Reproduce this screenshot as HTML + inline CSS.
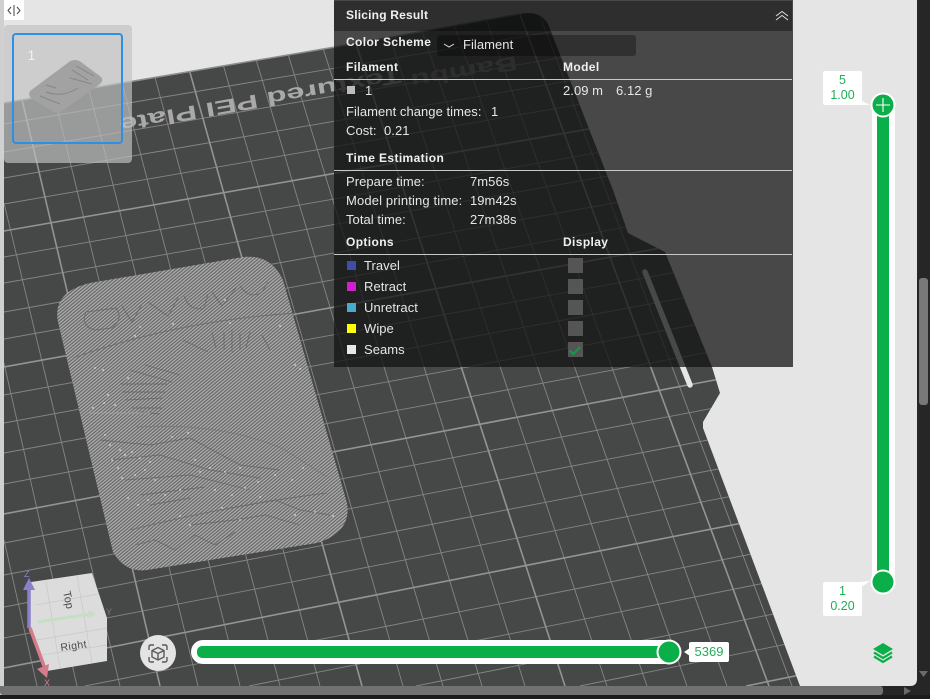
<!DOCTYPE html>
<html lang="en">
<head>
<meta charset="utf-8">
<title>Slicing Result</title>
<style>
html,body{margin:0;padding:0;width:930px;height:699px;overflow:hidden;background:#e5e5e5;font-family:"Liberation Sans",sans-serif}
#stage{position:relative;width:930px;height:699px;overflow:hidden}
svg.full{position:absolute;left:0;top:0;display:block}
.abs{position:absolute}
#panel{position:absolute;left:334px;top:0;width:459px;height:367px;background:rgba(19,19,19,.75)}
#title{position:absolute;left:334px;top:1px;width:458px;height:30px;background:rgba(0,0,0,.36)}
.t{position:absolute;height:16px;line-height:16px;font-size:13px;letter-spacing:.05px;color:#e6e6e6;white-space:pre}
.b{font-weight:bold;font-size:12px;letter-spacing:.38px;color:#f0f0f0}
.hr{position:absolute;left:334px;width:458px;height:1px;background:#c9c9c9}
.sw{position:absolute;left:347px;width:9px;height:9px}
.cb{position:absolute;left:568px;width:15px;height:15px;background:#555}
.lab{position:absolute;background:#fff;color:#1fae57;font-size:12.5px;line-height:14.500px;text-align:center;border-radius:2px}
</style>
</head>
<body>
<div id="stage">
<svg class="full" width="930" height="699" viewBox="0 0 930 699">
<defs>
<clipPath id="plate"><path d="M4 103L335 47L520 14Q540 10 548 24L613 190L628 233L665 252L712 367L720 393L703 422L703 428L800 686L4 686Z"/></clipPath>
<pattern id="hatch" patternUnits="userSpaceOnUse" width="2.5" height="2.5" patternTransform="rotate(-40)">
<rect width="2.5" height="2.5" fill="#666"/>
<rect width="2.5" height="1.25" fill="#b0b0b0"/>
</pattern>
<clipPath id="modelclip"><path d="M90 283L243 257Q271 254 283 280L347 503Q352 532 317 543L147 570Q125 573 113 552L58 322Q52 292 90 283Z"/></clipPath>
</defs>
<rect width="930" height="699" fill="#e5e5e5"/>
<rect x="0" y="0" width="4" height="699" fill="#cfd0cf"/>
<path d="M4 103L335 47L520 14Q540 10 548 24L613 190L628 233L665 252L712 367L720 393L703 422L703 428L800 686L4 686Z" fill="#464847"/>
<path d="M4 103L335 47L520 14" fill="none" stroke="#8e8e8e" stroke-width="1.5"/>
<g clip-path="url(#plate)">
<path fill="none" stroke="#858585" stroke-width=".9" d="M4 124L644 16M4 152L800 17M4 178L900 24M4 204L900 48.9M4 257L900 99.5M4 283L900 124.3M4 312L900 152M4 339L900 177.8M4 395L900 231.3M4 423L900 258M4 453L900 286.7M4 484L900 316.3M4 543L900 372.7M4 575L900 403.2M4 607L900 433.8M4 638L900 463.4M85 686L900 524.6M249 686L900 556M416 686L900 588.5M580 686L900 621"/>
<path fill="none" stroke="#858585" stroke-width=".9" d="M4 203L120 686M4 363L77 686M4 540L37 686M30.6 0L198 686M66.2 0L240 686M100.2 0L280 686M134 0L320 686M204.4 0L403 686M238.3 0L443 686M271.4 0L482 686M307.8 0L525 686M377.4 0L607 686M411.3 0L647 686M445.2 0L687 686M479.1 0L727 686M534.2 0L792 686"/>
<path fill="none" stroke="#939393" stroke-width="1.6" d="M4 231L900 74.7M4 367L900 204.6M4 514L900 345M4 668L900 492M746 686L900 654.5M4 23L160 686M169.7 0L362 686M341.8 0L565 686M514.7 0L769 686"/>
<g font-family="Liberation Sans, sans-serif" font-weight="bold" fill="#a9a9a9">
<text transform="translate(400 69) rotate(170)" font-size="20" textLength="286" lengthAdjust="spacingAndGlyphs">Textured PEI Plate</text>
<text transform="translate(516 56) rotate(170)" font-size="20" fill="#7d7d7d" textLength="108" lengthAdjust="spacingAndGlyphs">Bambu</text>
</g>
<path d="M645 272L690 385" stroke="#e5e5e5" stroke-width="5.500" stroke-linecap="round"/>
</g>
<!-- printed model -->
<path d="M90 283L243 257Q271 254 283 280L347 503Q352 532 317 543L147 570Q125 573 113 552L58 322Q52 292 90 283Z" fill="url(#hatch)"/>
<g clip-path="url(#modelclip)" fill="none" stroke="#5f5f5f" stroke-width=".9" opacity=".7">
<path d="M73 358Q180 320 297 313"/>
<path d="M86 312Q80 326 95 330L112 328Q124 318 116 308ZM122 306L132 322L142 304M148 302L168 316L178 298M184 296Q190 312 204 308L208 294M212 292L222 306L236 288M240 286Q250 300 262 292L268 282"/>
<path d="M183 340L208 352M212 332L216 348M224 332V350M232 330V352M240 333V350M250 332L246 348M262 335L270 350"/>
<path stroke="#747474" d="M137 427Q223 422 285 450L327 477"/>
<path d="M145 365L180 375M130 370L172 382M120 384L167 384M122 392L165 392M125 400L162 398M132 408L162 408M140 412L160 414"/>
<path d="M130 530Q230 505 327 493"/>
<path d="M100 440L150 445L190 438L240 465L280 470M110 460L160 455L210 470L260 478M125 480L190 475L250 490M140 495L205 487M150 505L190 498M220 510L275 500L300 510L330 515M190 525L235 520L265 515L300 525"/>
<path d="M135 545L155 540L175 550L195 535L215 545L235 532"/>
<path stroke="#a5a5a5" d="M87 413L150 413"/>
</g>
<path clip-path="url(#modelclip)" fill="none" stroke="#f3f3f3" stroke-width="1.400" stroke-linecap="round" d="M105 435h.1M110 445h.1M112 460h.1M120 450h.1M118 468h.1M125 455h.1M132 452h.1M140 458h.1M122 478h.1M135 475h.1M145 470h.1M150 462h.1M155 480h.1M172 437h.1M188 433h.1M195 460h.1M200 472h.1M210 468h.1M225 472h.1M240 468h.1M245 488h.1M258 482h.1M275 475h.1M303 468h.1M292 480h.1M148 500h.1M128 498h.1M138 505h.1M165 495h.1M180 490h.1M215 490h.1M232 495h.1M260 497h.1M295 515h.1M315 512h.1M333 516h.1M240 520h.1M222 508h.1M180 516h.1M190 525h.1M135 336h.1M103 370h.1M95 368h.1M128 378h.1M108 395h.1M104 403h.1M93 408h.1M115 405h.1M173 324h.1M140 327h.1M225 300h.1M230 323h.1M280 326h.1M295 365h.1M300 369h.1"/>
<!-- thumbnail panel -->
<rect x="4" y="25" width="128" height="138" rx="4" fill="#c1c1c1" fill-opacity=".68"/>
<path d="M30 91L69 62Q75 58 81 62L101 77Q104 80 100 84L62 111Q57 114 52 111L31 98Q28 95 30 91Z" fill="#a2a2a2"/>
<path d="M46 85L56 88M46 92Q62 98 78 88M72 70L88 80M76 66L94 76M70 78L92 84M40 96L60 104" stroke="#868686" stroke-width="1" fill="none"/>
<rect x="13" y="34" width="109" height="109" rx="3" fill="none" stroke="#2e8fe6" stroke-width="2"/>
<text x="27.5" y="60" font-family="Liberation Sans, sans-serif" font-size="14" fill="#f2f2f2">1</text>
<!-- top-left button -->
<rect x="4" y="0" width="20" height="20" fill="#fff"/>
<path d="M11 7L8 10.500L11 14M17 7L20 10.500L17 14" fill="none" stroke="#444" stroke-width="1"/>
<path d="M14 5V16" stroke="#444" stroke-width="1"/>
<!-- navigation cube -->
<path d="M31 582L92 573L107 618V661L47 671L29 625Z" fill="#dcdcdc"/>
<path d="M46 581L60 668M77 575L92 663M36 605L98 594M37 640L107 628M42 655L107 645" stroke="#c8c8c8" stroke-width=".7" fill="none"/>
<path d="M37 622L90 614" stroke="#c6dfc4" stroke-width="3"/>
<path d="M88 610L96 614L89 618Z" fill="#c6dfc4"/>
<text transform="translate(63 592) rotate(78)" font-family="Liberation Sans, sans-serif" font-size="11" fill="#4a4a4a">Top</text>
<text transform="translate(61 651) rotate(-8)" font-family="Liberation Sans, sans-serif" font-size="10.500" fill="#4a4a4a" letter-spacing=".4">Right</text>
<path d="M29 590V628" stroke="#8c80c9" stroke-width="3.500"/>
<path d="M29 578L35 590H23Z" fill="#8c80c9"/>
<text x="24" y="577" font-family="Liberation Sans, sans-serif" font-size="9" fill="#8c80c9">Z</text>
<path d="M30 628L44 666" stroke="#d67b8b" stroke-width="3.500"/>
<path d="M37 669L49 664L47 678Z" fill="#d67b8b"/>
<text x="44" y="686" font-family="Liberation Sans, sans-serif" font-size="9" fill="#d67b8b">X</text>
<text x="106" y="615" font-family="Liberation Sans, sans-serif" font-size="9" fill="#7c7c7c">Y</text>
<!-- right dark strip and scrollbars -->
<path d="M917 0H930V699H880V686H910Q917 686 917 679Z" fill="#262626"/>
<rect x="0" y="686" width="883" height="9" rx="3" fill="#717171"/>
<rect x="0" y="686" width="870" height="4" fill="#717171"/>
<rect x="0" y="695" width="930" height="4" fill="#1c1c1c"/>
<path d="M904 687L911 691L904 695Z" fill="#6a6a6a"/>
<rect x="919" y="278" width="9" height="127" rx="3" fill="#787878"/>
<path d="M919 671H928L923.500 677Z" fill="#6a6a6a"/>
<!-- vertical slider -->
<rect x="872" y="94" width="23" height="500" rx="11.500" fill="#fff"/>
<rect x="877" y="105" width="12" height="477" fill="#0aaf49"/>
<circle cx="883" cy="105" r="12.500" fill="#fff"/>
<circle cx="883" cy="105" r="10.500" fill="#0aaf49"/>
<path d="M876 105H890M883 98V112" stroke="#fff" stroke-width="1.100"/>
<circle cx="883" cy="582" r="12.500" fill="#fff"/>
<circle cx="883" cy="582" r="10.500" fill="#0aaf49"/>
<path d="M860 100L870 105L860 105Z" fill="#fff"/>
<path d="M860 582L870 581L860 588Z" fill="#fff"/>
<!-- horizontal slider -->
<rect x="191" y="640" width="490" height="24" rx="12" fill="#fff"/>
<rect x="197" y="646" width="472" height="12" rx="5" fill="#0aaf49"/>
<circle cx="669" cy="652" r="12.500" fill="#fff"/>
<circle cx="669" cy="652" r="10.500" fill="#0aaf49"/>
<path d="M690 648L684 652L690 656Z" fill="#fff"/>
<!-- recentre button -->
<circle cx="158" cy="653" r="18" fill="#e4e4e4"/>
<g fill="none" stroke="#5a5a5a" stroke-width="1.400">
<path d="M149 650V647Q149 645 151 645H154M162 645H165Q167 645 167 647V650M167 657V660Q167 662 165 662H162M154 662H151Q149 662 149 660V657"/>
<path d="M158 647.500L164 650.500V657L158 660L152 657V650.500ZM152 650.500L158 653.500L164 650.500M158 653.500V660"/>
</g>
<!-- layers icon -->
<path d="M883 643L893 649L883 655L873 649Z" fill="#0aaf49"/>
<path d="M874 652.500L883 658L892 652.500" fill="none" stroke="#0aaf49" stroke-width="2.200"/>
<path d="M874 656.500L883 662L892 656.500" fill="none" stroke="#0aaf49" stroke-width="2.200"/>
</svg>

<div class="lab" style="left:823px;top:71px;width:39px;height:34px;padding-top:2px;box-sizing:border-box">5<br>1.00</div>
<div class="lab" style="left:823px;top:582px;width:39px;height:34px;padding-top:2px;box-sizing:border-box">1<br>0.20</div>
<div class="lab" style="left:689px;top:642px;width:40px;height:20px;line-height:20px;font-size:13px">5369</div>

<div id="panel"></div>
<div id="title"></div>
<div class="t b" style="left:346px;top:7px;letter-spacing:.2px">Slicing Result</div>
<svg class="abs" style="left:775px;top:9px" width="14" height="13" viewBox="0 0 14 13"><path d="M1 7L7 2.500L13 7M1 11L7 6.500L13 11" fill="none" stroke="#ddd" stroke-width="1"/></svg>
<div class="t b" style="left:346px;top:34px">Color Scheme</div>
<div class="abs" style="left:437px;top:35px;width:199px;height:21px;background:rgba(0,0,0,.32);border-radius:3px"></div>
<svg class="abs" style="left:443px;top:43px" width="12" height="6" viewBox="0 0 12 6"><path d="M1 1L6 4L11 1" fill="none" stroke="#ddd" stroke-width="1"/></svg>
<div class="t" style="left:463px;top:37px">Filament</div>

<div class="t b" style="left:346px;top:59px">Filament</div>
<div class="t b" style="left:563px;top:59px">Model</div>
<div class="hr" style="top:79px"></div>
<div class="abs" style="left:347px;top:86px;width:8px;height:8px;background:#bdbdbd"></div>
<div class="t" style="left:365px;top:83px">1</div>
<div class="t" style="left:563px;top:83px">2.09 m</div>
<div class="t" style="left:616px;top:83px">6.12 g</div>
<div class="t" style="left:346px;top:104px">Filament change times:</div>
<div class="t" style="left:491px;top:104px">1</div>
<div class="t" style="left:346px;top:123px">Cost:</div>
<div class="t" style="left:384px;top:123px">0.21</div>

<div class="t b" style="left:346px;top:150px">Time Estimation</div>
<div class="hr" style="top:170px"></div>
<div class="t" style="left:346px;top:174px">Prepare time:</div>
<div class="t" style="left:470px;top:174px">7m56s</div>
<div class="t" style="left:346px;top:193px;letter-spacing:.15px">Model printing time:</div>
<div class="t" style="left:470px;top:193px">19m42s</div>
<div class="t" style="left:346px;top:212px">Total time:</div>
<div class="t" style="left:470px;top:212px">27m38s</div>

<div class="t b" style="left:346px;top:234px">Options</div>
<div class="t b" style="left:563px;top:234px">Display</div>
<div class="hr" style="top:254px"></div>

<div class="sw" style="top:261px;background:#3f4ca8"></div>
<div class="t" style="left:364px;top:258px">Travel</div>
<div class="cb" style="top:258px"></div>
<div class="sw" style="top:282px;background:#cc22cc"></div>
<div class="t" style="left:364px;top:279px">Retract</div>
<div class="cb" style="top:279px"></div>
<div class="sw" style="top:303px;background:#47abcf"></div>
<div class="t" style="left:364px;top:300px">Unretract</div>
<div class="cb" style="top:300px"></div>
<div class="sw" style="top:324px;background:#ffff00"></div>
<div class="t" style="left:364px;top:321px">Wipe</div>
<div class="cb" style="top:321px"></div>
<div class="sw" style="top:345px;background:#e8e8e8"></div>
<div class="t" style="left:364px;top:342px">Seams</div>
<div class="cb" style="top:342px"></div>
<svg class="abs" style="left:568px;top:342px" width="15" height="15" viewBox="0 0 15 15"><path d="M2 8.500L5.500 12L12 5" fill="none" stroke="#0f9a45" stroke-width="2.200"/></svg>
</div>
</body>
</html>
